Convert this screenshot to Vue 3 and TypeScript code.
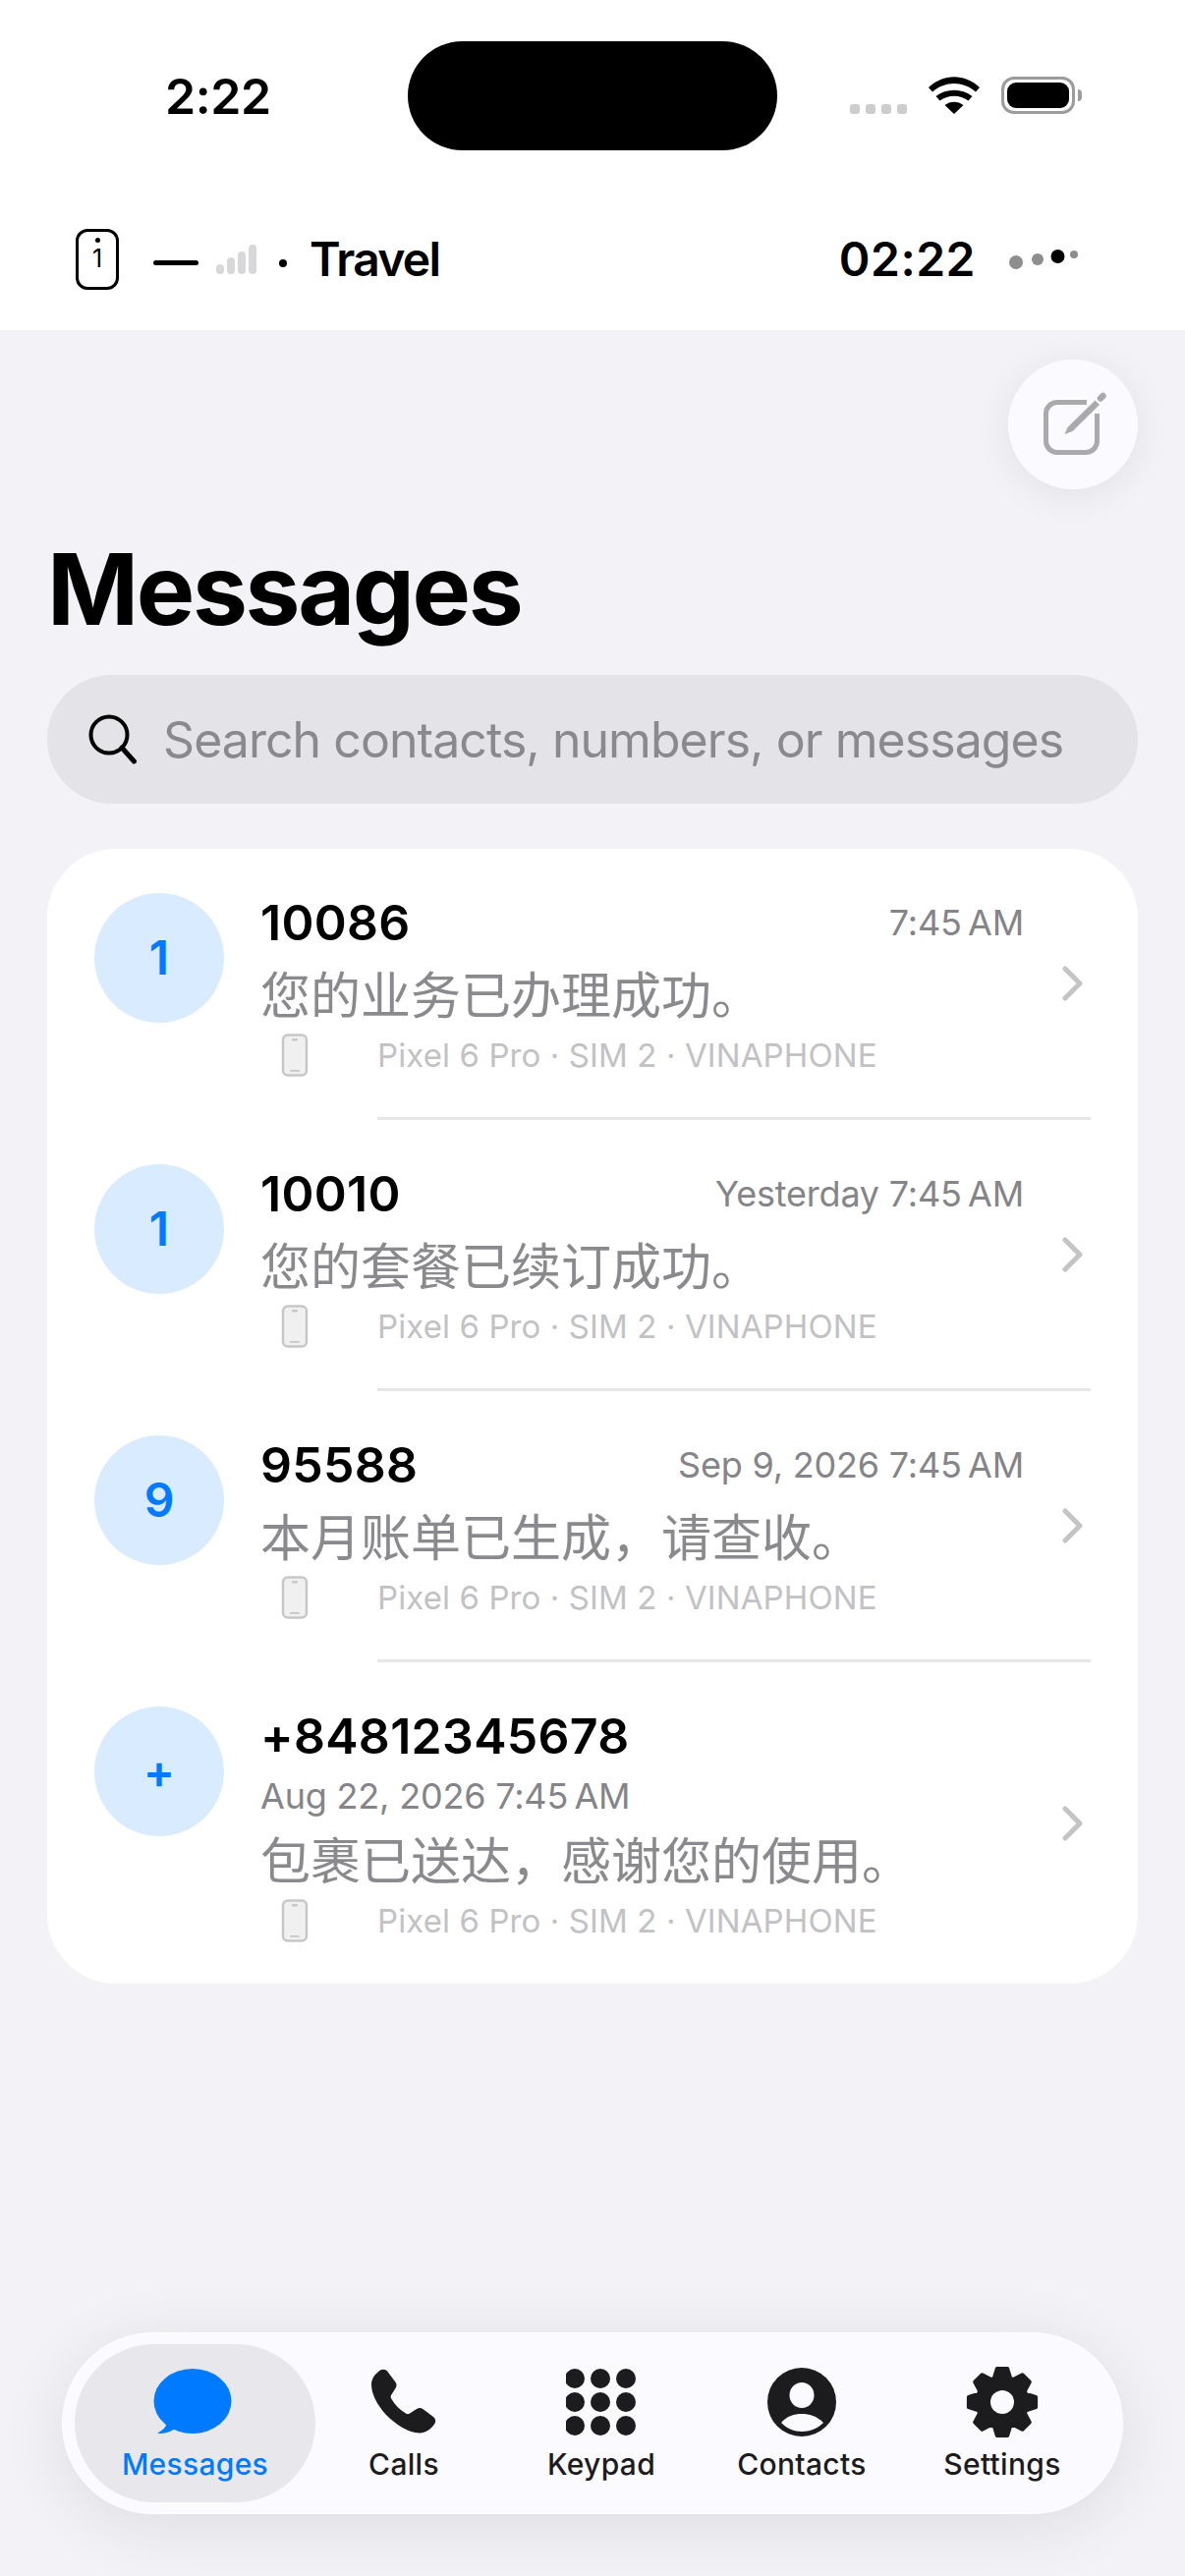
<script setup lang="ts">
interface Row {
  id: number
  badge: string
  name: string
  time: string
  stacked: boolean
  text: string
}

const rows: Row[] = [
  { id: 1, badge: '1', name: '10086', time: '7:45\u202fAM', stacked: false, text: '您的业务已办理成功。' },
  { id: 2, badge: '1', name: '10010', time: 'Yesterday 7:45\u202fAM', stacked: false, text: '您的套餐已续订成功。' },
  { id: 3, badge: '9', name: '95588', time: 'Sep 9, 2026 7:45\u202fAM', stacked: false, text: '本月账单已生成，请查收。' },
  { id: 4, badge: '+', name: '+84812345678', time: 'Aug 22, 2026 7:45\u202fAM', stacked: true, text: '包裹已送达，感谢您的使用。' },
]

function gearPath(): string {
  const pts: string[] = []
  const rOut = 34.5
  const rIn = 25.5
  for (let i = 0; i < 8; i++) {
    const a = (i * Math.PI) / 4 - Math.PI / 2
    const list: [number, number][] = [
      [rIn, a - 0.33],
      [rOut, a - 0.15],
      [rOut, a + 0.15],
      [rIn, a + 0.33],
    ]
    for (const [r, t] of list) {
      pts.push(`${(37 + r * Math.cos(t)).toFixed(2)} ${(37 + r * Math.sin(t)).toFixed(2)}`)
    }
  }
  return 'M' + pts.join('L') + 'Z'
}
const gear = gearPath()
const keypad: [number, number][] = []
for (const y of [11, 35, 59]) for (const x of [9, 35, 61]) keypad.push([x, y])
</script>

<template>
  <div class="page">
    <header class="top">
      <div class="status">
        <div class="status-left"><span class="clock">2:22</span></div>
        <div class="island"></div>
        <div class="status-right">
          <span class="cell"><i></i><i></i><i></i><i></i></span>
          <svg class="wifi" width="52" height="38" viewBox="0 0 52 38">
            <path d="M26 38 L16.500 29 C22 24.500 30 24.500 35.500 29 Z" fill="#000" />
            <path d="M11.500 24.500 L7.500 20 C18 11.500 34 11.500 44.500 20 L40.500 24.500 C32 18 20 18 11.500 24.500 Z" fill="#000" />
            <path d="M4 15.500 L0 11 C15 -3.500 37 -3.500 52 11 L48 15.500 C35 4 17 4 4 15.500 Z" fill="#000" />
          </svg>
          <span class="battery"><span class="battery-fill"></span></span>
          <span class="battery-nub"></span>
        </div>
      </div>
      <div class="subbar">
        <span class="sim"><i class="sim-dot"></i><span class="sim-num">1</span></span>
        <span class="dash"></span>
        <svg class="bars" width="42" height="30" viewBox="0 0 42 30">
          <rect x="0" y="20" width="8" height="10" rx="4" fill="#d8d8da" />
          <rect x="11" y="13" width="8" height="17" rx="4" fill="#d8d8da" />
          <rect x="22" y="7" width="8" height="23" rx="4" fill="#d8d8da" />
          <rect x="33" y="0" width="8" height="30" rx="4" fill="#d8d8da" />
        </svg>
        <span class="mid-dot"></span>
        <span class="carrier">Travel</span>
        <span class="clock2">02:22</span>
        <svg class="dots" width="70" height="24" viewBox="0 0 70 24">
          <circle cx="7" cy="16" r="7" fill="#8e8e8e" />
          <circle cx="29" cy="13" r="6" fill="#8e8e8e" />
          <circle cx="49.500" cy="10" r="7" fill="#000" />
          <circle cx="66" cy="8" r="4" fill="#8e8e8e" />
        </svg>
      </div>
    </header>

    <main class="main">
      <div class="compose-wrap">
        <button class="compose" type="button" aria-label="Compose">
          <svg width="70" height="70" viewBox="0 0 70 70">
            <path d="M46 12.500 H16 A11.500 11.500 0 0 0 4.500 24 V52 A11.500 11.500 0 0 0 16 63.500 H45 A11.500 11.500 0 0 0 56.500 52 V24" fill="none" stroke="#aaaaac" stroke-width="5" />
            <path d="M23.500 45 L26.500 38 L54.500 10.500 L59 15 L31.500 42 Z" fill="#aaaaac" />
            <path d="M60 8.500 L62.500 6" stroke="#aaaaac" stroke-width="6.500" stroke-linecap="round" />
          </svg>
        </button>
      </div>

      <h1 class="title">Messages</h1>

      <div class="search">
        <svg width="52" height="52" viewBox="0 0 52 52">
          <circle cx="21" cy="21" r="18.500" fill="none" stroke="#000" stroke-width="4" />
          <path d="M34 34 L46.500 48" stroke="#000" stroke-width="5" stroke-linecap="round" />
        </svg>
        <span class="placeholder">Search contacts, numbers, or messages</span>
      </div>

      <section class="card">
        <template v-for="(row, i) in rows" :key="row.id">
          <div v-if="i > 0" class="sep"></div>
          <article class="row">
            <div class="avatar">{{ row.badge }}</div>
            <div class="content">
              <div class="head">
                <span class="name">{{ row.name }}</span>
                <span v-if="!row.stacked" class="time">{{ row.time }}</span>
              </div>
              <div v-if="row.stacked" class="time stacked">{{ row.time }}</div>
              <div class="msg">{{ row.text }}</div>
              <div class="device">
                <svg class="phone" width="28" height="44" viewBox="0 0 28 44">
                  <rect x="2" y="1.500" width="24" height="41" rx="5" fill="#f0f0f0" stroke="#c7c7c9" stroke-width="2.500" />
                  <rect x="11" y="5" width="6" height="2.500" rx="1.200" fill="#c7c7c9" />
                  <rect x="9" y="37" width="10" height="1.800" rx="0.900" fill="#c7c7c9" />
                </svg>
                <span class="device-text">Pixel 6 Pro · SIM 2 · VINAPHONE</span>
              </div>
            </div>
            <svg class="chev" width="26" height="38" viewBox="0 0 26 38">
              <path d="M5 4 L20 19 L5 34" fill="none" stroke="#c4c4c6" stroke-width="5" stroke-linecap="round" stroke-linejoin="round" />
            </svg>
          </article>
        </template>
      </section>
    </main>

    <nav class="tabs">
      <div class="tab active">
        <svg class="bubble" width="80" height="68" viewBox="0 0 80 68">
          <ellipse cx="40" cy="33" rx="39.500" ry="33" fill="#007aff" />
          <path d="M14 50 C15 58 11 62 4 65.500 C9 67 17 65 24 60 Z" fill="#007aff" />
        </svg>
        <span>Messages</span>
      </div>
      <div class="tab">
        <svg width="66" height="68" viewBox="0 0 66 68">
          <path d="M9 1.500 C12 0 15 1 16.500 3 L24 13 C26 15.500 26 17.500 24.500 20 L20 27 C19.500 28.500 19.500 29.500 20.500 31 C24 37 29 42 35 45.500 C36.500 46.500 37.500 46.500 39 45.500 L46 41 C48.500 39.500 50.500 39.500 53 41.500 L63 49 C65.500 51 66 54 64 56.500 C60 62 55 65.500 49 65.500 C38 65.500 25 57 15 47 C6 37 0 26 0 16 C0 10 4 5 9 1.500 Z" fill="#1c1c1e" />
        </svg>
        <span>Calls</span>
      </div>
      <div class="tab">
        <svg width="72" height="70" viewBox="0 0 72 70">
          <circle v-for="(p, k) in keypad" :key="k" :cx="p[0]" :cy="p[1]" r="10" fill="#1c1c1e" />
        </svg>
        <span>Keypad</span>
      </div>
      <div class="tab">
        <svg width="70" height="70" viewBox="0 0 70 70">
          <circle cx="35" cy="35" r="35" fill="#1c1c1e" />
          <ellipse cx="35" cy="28" rx="12.500" ry="13" fill="#fbfbff" />
          <path d="M14 56 C20 49 27 47 35 47 C43 47 50 49 57 56 C51 62 43 65 35 65 C27 65 20 62 14 56 Z" fill="#fbfbff" />
        </svg>
        <span>Contacts</span>
      </div>
      <div class="tab">
        <svg width="74" height="74" viewBox="0 0 74 74" class="gear">
          <path :d="gear" fill="#1c1c1e" stroke="#1c1c1e" stroke-width="4" stroke-linejoin="round" />
          <circle cx="37" cy="37" r="12" fill="#fbfbff" />
        </svg>
        <span>Settings</span>
      </div>
    </nav>
  </div>
</template>

<style scoped>
.page {
  position: relative;
  width: 1206px;
  height: 2622px;
  overflow: hidden;
  background: #f2f2f7;
  font-family: Inter, "Noto Sans CJK SC", sans-serif;
  color: #000;
}
.top {
  background: #fff;
  height: 336px;
}
.status {
  display: flex;
  padding-top: 42px;
  height: 111px;
  box-sizing: content-box;
}
.status-left {
  width: 414px;
  padding-left: 168px;
  box-sizing: border-box;
  display: flex;
  align-items: center;
}
.clock {
  font-size: 50px;
  font-weight: 600;
  line-height: 60px;
  letter-spacing: -0.4px;
}
.island {
  width: 376px;
  height: 111px;
  margin-left: 1px;
  margin-right: -1px;
  border-radius: 56px;
  background: #000;
}
.status-right {
  display: flex;
  align-items: flex-end;
  padding-left: 75px;
  padding-bottom: 37px;
  height: 74px;
  box-sizing: content-box;
}
.cell {
  display: flex;
  gap: 6px;
  margin-right: 22px;
}
.cell i {
  width: 10px;
  height: 10px;
  border-radius: 3px;
  background: #cdcdcd;
}
.battery {
  margin-left: 22px;
  width: 75px;
  height: 38px;
  border: 3px solid #9c9c9c;
  border-radius: 13px;
  box-sizing: border-box;
  padding: 3px;
  display: flex;
}
.battery-fill {
  flex: 1;
  background: #000;
  border-radius: 9px;
}
.battery-nub {
  width: 4px;
  height: 12px;
  margin: 0 0 13px 3px;
  background: #9c9c9c;
  border-radius: 0 6px 6px 0;
}
.subbar {
  display: flex;
  align-items: center;
  height: 62px;
  padding: 80px 0 0 77px;
  box-sizing: content-box;
}
.sim {
  width: 44px;
  height: 62px;
  border: 3.5px solid #000;
  border-radius: 12px;
  box-sizing: border-box;
  display: flex;
  flex-direction: column;
  align-items: center;
  padding-top: 6px;
}
.sim-dot {
  width: 5px;
  height: 5px;
  border-radius: 50%;
  background: #000;
}
.sim-num {
  font-size: 25px;
  font-weight: 400;
  line-height: 30px;
  margin-top: 1px;
}
.dash {
  width: 46px;
  height: 5px;
  border-radius: 3px;
  background: #000;
  margin: 6px 0 0 35px;
}
.bars {
  margin: 0 0 0 18px;
}
.mid-dot {
  width: 8px;
  height: 8px;
  border-radius: 50%;
  background: #000;
  margin: 8px 0 0 22px;
}
.carrier {
  font-size: 48px;
  font-weight: 600;
  line-height: 60px;
  letter-spacing: -1.7px;
  margin-left: 23px;
}
.clock2 {
  font-size: 48px;
  font-weight: 600;
  line-height: 60px;
  letter-spacing: 0.5px;
  margin-left: auto;
}
.dots {
  margin: 0 109px 2px 34px;
  align-self: center;
}
.main {
  padding: 0 48px;
}
.compose-wrap {
  display: flex;
  justify-content: flex-end;
  padding-top: 30px;
}
.compose {
  width: 132px;
  height: 132px;
  border: none;
  padding: 0;
  border-radius: 50%;
  background: #fbfbff;
  box-shadow: 0 6px 40px rgba(0, 0, 0, 0.07);
  display: flex;
  align-items: center;
  justify-content: center;
}
.compose svg {
  margin-left: 6px;
}
.title {
  margin: 42px 0 0;
  font-size: 100px;
  font-weight: 700;
  line-height: 120px;
  letter-spacing: -2.4px;
}
.search {
  margin-top: 27px;
  height: 131px;
  border-radius: 66px;
  background: #e3e3e8;
  display: flex;
  align-items: center;
  padding-left: 42px;
  gap: 24px;
}
.placeholder {
  font-size: 50px;
  color: #8a8a8e;
  line-height: 60px;
  letter-spacing: -0.95px;
}
.card {
  margin-top: 46px;
  background: #fff;
  border-radius: 70px;
}
.sep {
  height: 3px;
  background: #e5e5ea;
  margin: 0 48px 0 336px;
}
.row {
  display: flex;
  align-items: center;
  padding: 0 48px;
  height: 273px;
  box-sizing: border-box;
}
.row:last-child {
  height: 327px;
}
.avatar {
  align-self: flex-start;
  flex: none;
  width: 132px;
  height: 132px;
  margin-top: 45px;
  padding-bottom: 2px;
  box-sizing: border-box;
  border-radius: 50%;
  background: #d9ebff;
  color: #007aff;
  font-size: 48px;
  font-weight: 600;
  display: flex;
  align-items: center;
  justify-content: center;
}
.content {
  flex: none;
  width: 777px;
  margin: 45px 0 0 37px;
  align-self: flex-start;
}
.head {
  display: flex;
  justify-content: space-between;
  align-items: center;
  height: 60px;
}
.name {
  font-size: 50px;
  font-weight: 600;
  line-height: 60px;
  letter-spacing: 0.3px;
}
.time {
  font-size: 36px;
  color: #858589;
  line-height: 44px;
  letter-spacing: -0.2px;
}
.stacked {
  margin-top: 9px;
}
.msg {
  font-size: 51px;
  color: #8a8a8e;
  line-height: 60px;
  margin-top: 15px;
}
.device {
  display: flex;
  align-items: center;
  height: 44px;
  margin-top: 8px;
  padding-left: 21px;
}
.device-text {
  margin-left: 70px;
  font-size: 33px;
  color: #c2c2c4;
  line-height: 44px;
  letter-spacing: 0.1px;
}
.chev {
  margin-left: 37px;
  flex: none;
}
.tabs {
  position: absolute;
  left: 63px;
  top: 2374px;
  width: 1080px;
  height: 185px;
  box-sizing: border-box;
  border-radius: 93px;
  background: #fbfbff;
  border: 1px solid rgba(255, 255, 255, 0.9);
  box-shadow: 0 12px 70px rgba(0, 0, 0, 0.09);
  padding: 11px 12px;
  display: grid;
  grid-template-columns: 245px 180px 222px 186px 222px;
}
.tab {
  display: flex;
  flex-direction: column;
  align-items: center;
  height: 161px;
  padding-top: 24px;
  box-sizing: border-box;
  color: #1c1c1e;
  font-size: 30px;
  font-weight: 500;
  line-height: 40px;
  letter-spacing: 0.3px;
  border-radius: 81px;
}
.tab svg {
  height: 70px;
  flex: none;
}
.tab span {
  margin-top: 8px;
}
.tab.active {
  background: #e8e8ec;
  color: #007aff;
}
.tab .bubble {
  margin-left: -6px;
}
.tab .gear {
  height: 74px;
  margin-top: -2px;
  margin-bottom: -2px;
}
</style>

<style>
html,
body {
  margin: 0;
  background: #f2f2f7;
}
</style>
